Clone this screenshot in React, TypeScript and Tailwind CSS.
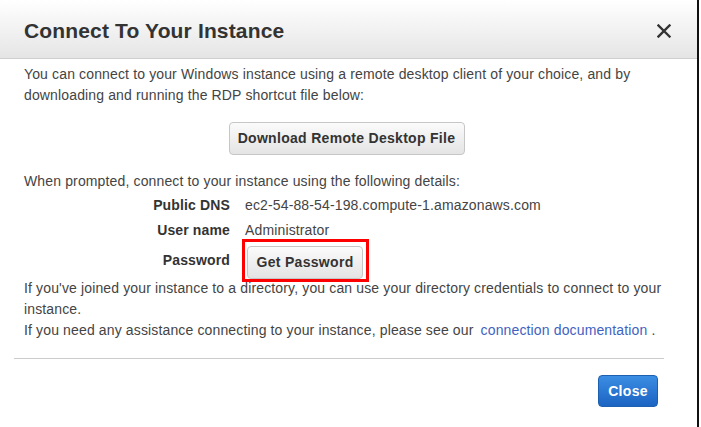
import React from "react";

export default function App() {
  const font = { fontFamily: '"Liberation Sans", Arial, sans-serif' };
  return (
    <div className="w-[701px] h-[427px] bg-white overflow-hidden" style={font}>
      <div className="w-[699px] h-full border-r-2 border-[#111] flex flex-col">
        {/* Header */}
        <div className="h-[59px] shrink-0 flex items-center justify-between pl-[24px] pr-[26px] bg-gradient-to-b from-white to-[#e5e5e5] border-b border-[#cfcfcf]">
          <h1 className="text-[21px] tracking-[0.15px] font-bold text-[#333] leading-none pt-[3px]">Connect To Your Instance</h1>
          <svg width="14" height="14" viewBox="0 0 14 14" className="mt-[3px]">
            <path d="M1.5 1.5 L12.5 12.5 M12.5 1.5 L1.5 12.5" stroke="#333" strokeWidth="2.4" strokeLinecap="square" />
          </svg>
        </div>

        {/* Body */}
        <div className="pl-[24px] w-[674px] text-[14px] tracking-[0.14px] leading-[21px] text-[#444] pt-[5px]">
          <p>
            You can connect to your Windows instance using a remote desktop client of your choice, and by downloading and running the RDP shortcut file below:
          </p>
          <div className="flex justify-center mt-[16px] pr-[5px]">
            <button className="h-[33px] w-[236px] rounded-[4px] border border-[#c6c6c6] bg-gradient-to-b from-[#fbfbfb] to-[#e4e4e4] text-[14px] tracking-[0.3px] font-bold text-[#333]">
              Download Remote Desktop File
            </button>
          </div>
          <p className="mt-[16px]">When prompted, connect to your instance using the following details:</p>

          <div className="flex flex-col">
            <div className="flex h-[21px] mt-[3px]">
              <div className="w-[206px] text-right font-bold text-[#333]">Public DNS</div>
              <div className="ml-[15px]">ec2-54-88-54-198.compute-1.amazonaws.com</div>
            </div>
            <div className="flex h-[21px] mt-[4px]">
              <div className="w-[206px] text-right font-bold text-[#333]">User name</div>
              <div className="ml-[15px]">Administrator</div>
            </div>
            <div className="flex h-[33px] mt-[5px] items-center">
              <div className="w-[206px] text-right font-bold text-[#333] -mt-[5px]">Password</div>
              <div className="ml-[17px] relative">
                <button className="h-[33px] w-[116px] rounded-[4px] border border-[#c6c6c6] bg-gradient-to-b from-[#fbfbfb] to-[#e4e4e4] text-[14px] tracking-[0.3px] font-bold text-[#333]">
                  Get Password
                </button>
                <div className="absolute -left-[5px] -right-[6px] -top-[7px] -bottom-[3px] border-[3px] border-[#ff0000] pointer-events-none" />
              </div>
            </div>
          </div>

          <p className="-mt-[1px]">
            If you've joined your instance to a directory, you can use your directory credentials to connect to your instance.
          </p>
          <p>
            If you need any assistance connecting to your instance, please see our{" "}
            <a className="text-[#3f62c2] ml-[3px]">connection documentation</a> .
          </p>
        </div>

        {/* Footer */}
        <div className="ml-[14px] w-[650px] border-t border-[#cccccc] mt-[17px]" />
        <div className="flex justify-end w-[664px] pr-[6px] mt-[16px]">
          <button className="h-[32px] w-[60px] rounded-[4px] border border-[#1d5fb0] bg-gradient-to-b from-[#3b8de3] to-[#1c64c2] text-white text-[14px] tracking-[0.3px] font-bold">
            Close
          </button>
        </div>
      </div>
    </div>
  );
}
